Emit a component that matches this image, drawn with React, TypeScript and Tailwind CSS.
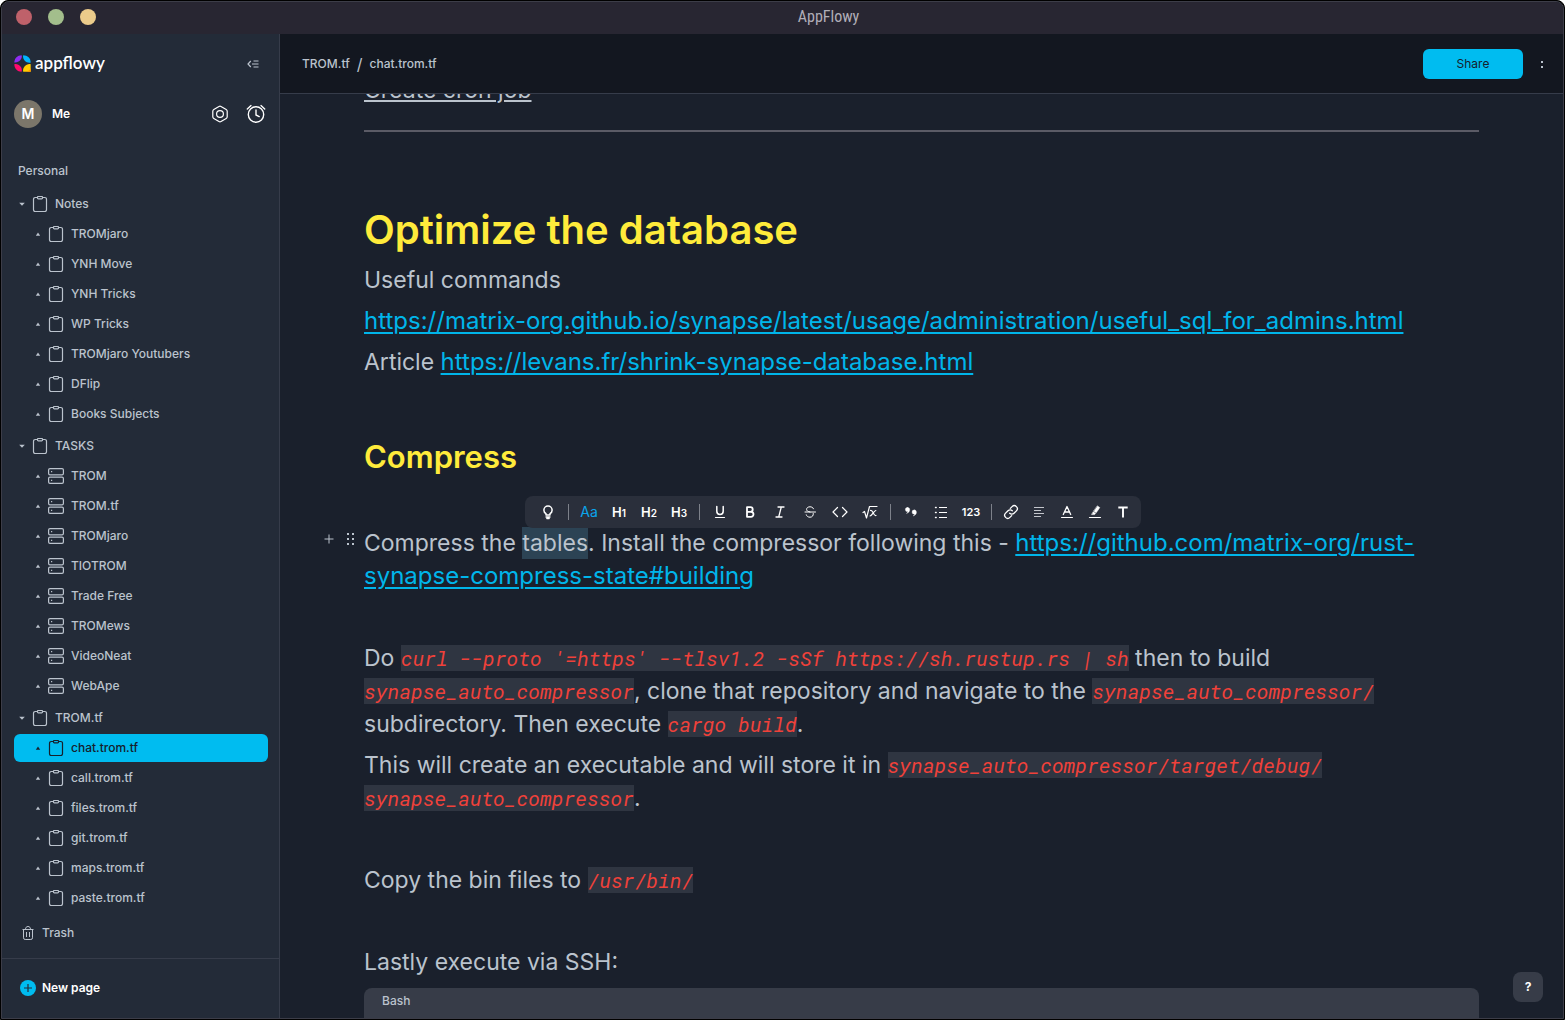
import React from "react";
import clsx from "clsx";

type PageKind = "doc" | "board";

interface PageItem {
  name: string;
  kind: PageKind;
}

interface Section {
  name: string;
  children: PageItem[];
}

const doc = (name: string): PageItem => ({ name, kind: "doc" });
const board = (name: string): PageItem => ({ name, kind: "board" });

const SECTIONS: Section[] = [
  {
    name: "Notes",
    children: [
      doc("TROMjaro"),
      doc("YNH Move"),
      doc("YNH Tricks"),
      doc("WP Tricks"),
      doc("TROMjaro Youtubers"),
      doc("DFlip"),
      doc("Books Subjects"),
    ],
  },
  {
    name: "TASKS",
    children: [
      board("TROM"),
      board("TROM.tf"),
      board("TROMjaro"),
      board("TIOTROM"),
      board("Trade Free"),
      board("TROMews"),
      board("VideoNeat"),
      board("WebApe"),
    ],
  },
  {
    name: "TROM.tf",
    children: [
      doc("chat.trom.tf"),
      doc("call.trom.tf"),
      doc("files.trom.tf"),
      doc("git.trom.tf"),
      doc("maps.trom.tf"),
      doc("paste.trom.tf"),
    ],
  },
];

const ACTIVE_PAGE = "chat.trom.tf";

function DocIcon() {
  return (
    <svg className="w-4 h-4 shrink-0" viewBox="0 0 16 16" fill="none" stroke="currentColor" strokeWidth="1.2">
      <path d="M5.500 1.500H3.200a1.700 1.700 0 0 0-1.700 1.700v10.600a1.700 1.700 0 0 0 1.700 1.700h9.600a1.700 1.700 0 0 0 1.700-1.700V3.200a1.700 1.700 0 0 0-1.700-1.700h-2.300" />
      <rect x="5.500" y="0.500" width="5" height="2.400" rx="0.800" />
    </svg>
  );
}

function BoardIcon() {
  return (
    <svg className="w-4 h-4 shrink-0" viewBox="0 0 16 16" fill="none" stroke="currentColor" strokeWidth="1.2">
      <rect x="0.600" y="0.600" width="14.800" height="6.200" rx="1.400" />
      <rect x="0.600" y="9.200" width="14.800" height="6.200" rx="1.400" />
      <path d="M3 3.700h1.200M3 12.300h1.200" />
    </svg>
  );
}

function Logo() {
  return (
    <svg className="w-[17px] h-[17px]" viewBox="0 0 17 17">
      <path d="M0.300 7.600C0.500 3 3.400 0.400 7.600 0.300C8.800 3 5.200 8 0.300 7.600Z" fill="#8e2df0" />
      <path d="M9.200 0.300C13.600 0.400 16.600 3.200 16.700 7.600C13 8.800 8 4.800 9.200 0.300Z" fill="#00b5ff" />
      <path d="M0.300 9.200C4.600 8.100 8.900 12.400 7.600 16.700C3.200 16.600 0.400 13.600 0.300 9.200Z" fill="#ff0a6c" />
      <path d="M16.700 9.200V16.700H9.200C8.100 13 12.400 8.200 16.700 9.200Z" fill="#ffce00" />
      <path d="M16.700 12.400V16.700H11.600C14.400 16.400 16.200 15 16.700 12.400Z" fill="#ff9500" />
    </svg>
  );
}

function ToolIcon({ children }: { children: React.ReactNode }) {
  return (
    <svg
      className="w-4 h-4"
      viewBox="0 0 16 16"
      fill="none"
      stroke="currentColor"
      strokeLinecap="round"
      strokeLinejoin="round"
    >
      {children}
    </svg>
  );
}

interface ToolProps {
  label: string;
  narrow?: boolean;
  active?: boolean;
  children: React.ReactNode;
}

function Tool({ label, narrow, active, children }: ToolProps) {
  return (
    <button
      type="button"
      aria-label={label}
      className={clsx(
        "h-8 flex items-center justify-center cursor-pointer",
        narrow ? "w-7" : "w-[30px]",
        active ? "text-[#0ba5ec]" : "text-white"
      )}
    >
      {children}
    </button>
  );
}

function Separator() {
  return <span className="w-px h-4 mx-[5px] bg-[#7d818a]" />;
}

function Heading({ level }: { level: number }) {
  return (
    <span className="text-[13px] font-semibold leading-4">
      H<span className="text-[10px]">{level}</span>
    </span>
  );
}

function FormatToolbar() {
  return (
    <div
      role="toolbar"
      aria-label="Formatting"
      className="absolute z-10 left-[161px] -top-[27px] w-max h-8 pl-2 pr-1 flex items-center rounded-lg bg-[#2a2f3b]"
    >
      <Tool label="Turn into">
        <ToolIcon>
          <path d="M6 11v-1.400C4.700 8.900 3.900 7.700 3.900 6.200a4.100 4.100 0 0 1 8.200 0c0 1.500-.8 2.700-2.100 3.400V11z" strokeWidth="1.500" />
          <path d="M6 13h4M6.800 14.500h2.400" strokeWidth="1.300" />
        </ToolIcon>
      </Tool>
      <Separator />
      <Tool label="Text" active>
        <span className="text-sm">Aa</span>
      </Tool>
      <Tool label="Heading 1"><Heading level={1} /></Tool>
      <Tool label="Heading 2"><Heading level={2} /></Tool>
      <Tool label="Heading 3"><Heading level={3} /></Tool>
      <Separator />
      <Tool label="Underline">
        <ToolIcon>
          <path d="M4.800 2.500v4.700a3.200 3.200 0 0 0 6.400 0V2.500" strokeWidth="1.500" />
          <path d="M3.500 13.500h9" strokeWidth="1.200" />
        </ToolIcon>
      </Tool>
      <Tool label="Bold">
        <ToolIcon>
          <path d="M5 3.200h3.400a2.300 2.300 0 0 1 0 4.600H5zM5 7.800h4a2.500 2.500 0 0 1 0 5H5z" strokeWidth="1.800" />
        </ToolIcon>
      </Tool>
      <Tool label="Italic">
        <ToolIcon>
          <path d="M6 3h6M4 13h6M9.300 3L6.700 13" strokeWidth="1.300" />
        </ToolIcon>
      </Tool>
      <Tool label="Strikethrough">
        <ToolIcon>
          <path d="M11.500 4.800C11 3.500 9.700 2.800 8 2.800c-2 0-3.400 1-3.400 2.600 0 1.500 1.200 2 3.400 2.600M11.300 9.500c.3 2.200-1.200 3.700-3.300 3.700-1.900 0-3.200-.8-3.700-2.400M3 8h10.500" />
        </ToolIcon>
      </Tool>
      <Tool label="Code">
        <ToolIcon>
          <path d="M5.500 3.500L1 8l4.500 4.500M10.500 3.500L15 8l-4.500 4.500" strokeWidth="1.200" />
        </ToolIcon>
      </Tool>
      <Tool label="Equation">
        <ToolIcon>
          <path d="M1 8.500l1.500-1 2 6.500L7.500 2.500H15M8.500 6.500c2.500-1 3 6 5.500 5M13.800 6.500C11.500 7 10.500 11.500 8 12" strokeWidth="1.200" />
        </ToolIcon>
      </Tool>
      <Separator />
      <Tool label="Quote">
        <ToolIcon>
          <path d="M4.600 3.500a2 2 0 1 0 .4 3.900c-.2.800-.7 1.400-1.500 2C5.800 8.800 6.800 7.200 6.700 5.500a2 2 0 0 0-2.100-2zM11.300 6a2 2 0 1 0 .4 3.900c-.2.800-.7 1.400-1.500 2 2.300-.6 3.300-2.200 3.200-3.900a2 2 0 0 0-2.100-2z" fill="currentColor" strokeWidth=".4" />
        </ToolIcon>
      </Tool>
      <Tool label="Bulleted list">
        <ToolIcon>
          <path d="M6 3.500h8M6 8.500h8M6 13.500h8" strokeLinecap="butt" />
          <path d="M2.500 3.500h.7M2.500 8.500h.7M2.500 13.500h.7" strokeWidth="1.400" />
        </ToolIcon>
      </Tool>
      <Tool label="Numbered list">
        <span className="text-[11px] leading-4 font-semibold">123</span>
      </Tool>
      <Separator />
      <Tool label="Link" narrow>
        <ToolIcon>
          <path d="M6.700 9.300a3 3 0 0 0 4.300 0l2.400-2.400a3 3 0 0 0-4.300-4.300L7.300 4.400M9.300 6.700a3 3 0 0 0-4.300 0L2.600 9.100a3 3 0 0 0 4.300 4.300l1.800-1.800" strokeWidth="1.300" />
        </ToolIcon>
      </Tool>
      <Tool label="Align" narrow>
        <ToolIcon>
          <path d="M3 3.500h10M3 6.500h7M3 9.500h10M3 12.500h7" stroke="#c3c6cc" strokeLinecap="butt" />
        </ToolIcon>
      </Tool>
      <Tool label="Text color" narrow>
        <ToolIcon>
          <path d="M4.300 10.500L8 2.500l3.700 8M5.500 8h5" strokeWidth="1.300" />
          <path d="M2.500 13.500h11" />
        </ToolIcon>
      </Tool>
      <Tool label="Highlight color" narrow>
        <ToolIcon>
          <path d="M10.500 2l2.300 1.600-3.600 5.200-2.300-1.600zM6.400 7.800l2.200 1.600-1 1.200H4.800z" fill="currentColor" strokeWidth=".5" />
          <path d="M2.500 13.500h11" strokeWidth="1.200" />
        </ToolIcon>
      </Tool>
      <Tool label="Font" narrow>
        <ToolIcon>
          <path d="M3.300 3.500h9.400M8 3.500V13.500" strokeWidth="1.900" strokeLinecap="butt" />
        </ToolIcon>
      </Tool>
    </div>
  );
}

function PageRow({ page }: { page: PageItem }) {
  const active = page.name === ACTIVE_PAGE;
  return (
    <a
      href="#"
      className={clsx(
        "h-7 mb-0.5 pl-[21px] flex items-center rounded-md text-xs",
        active ? "bg-[#00bcf0] text-[#16202c] font-medium" : "text-[#bbc3cd] font-medium"
      )}
    >
      <svg className="w-1.5 h-1.5 mr-[7px]" viewBox="0 0 6 6" fill="currentColor">
        <path d="M0.800 4.800L3 1.600l2.200 3.200z" />
      </svg>
      {page.kind === "doc" ? <DocIcon /> : <BoardIcon />}
      <span className="ml-[7px]">{page.name}</span>
    </a>
  );
}

function Sidebar() {
  return (
    <aside className="w-[278px] shrink-0 flex flex-col bg-[#232b38] border-r border-[#363c4a] text-[#bbc3cd]">
      <div className="h-[59px] pl-3 pr-5 flex items-center justify-between">
        <div className="flex items-center gap-1 text-white">
          <Logo />
          <span className="text-[17px] font-semibold leading-6 pb-0.5 font-[Lato,sans-serif]">appflowy</span>
        </div>
        <button type="button" aria-label="Hide sidebar">
          <svg className="w-3 h-3" viewBox="0 0 12 12" fill="none" stroke="currentColor">
            <path d="M3.800 3L1 6l2.800 3M6.500 3h5M5 6h6.500M6.500 9h5" strokeWidth="1.200" />
          </svg>
        </button>
      </div>

      <div className="h-[41px] pl-3 pr-[13px] flex items-center">
        <span className="w-7 h-7 rounded-full bg-[#7b766a] text-white text-sm font-semibold flex items-center justify-center">
          M
        </span>
        <span className="ml-2.5 text-xs font-semibold text-white">Me</span>
        <div className="ml-auto flex gap-4 text-white">
          <button type="button" aria-label="Settings">
            <svg className="w-5 h-5" viewBox="0 0 20 20" fill="none" stroke="currentColor" strokeWidth="1.200">
              <path d="M9 2.500a2 2 0 0 1 2 0l5.200 3a2 2 0 0 1 1 1.700v5.600a2 2 0 0 1-1 1.700l-5.200 3a2 2 0 0 1-2 0l-5.200-3a2 2 0 0 1-1-1.700V7.200a2 2 0 0 1 1-1.700z" />
              <circle cx="10" cy="10" r="3.400" />
            </svg>
          </button>
          <button type="button" aria-label="Reminders">
            <svg className="w-5 h-5" viewBox="0 0 20 20" fill="none" stroke="currentColor" strokeWidth="1.400" strokeLinecap="round">
              <circle cx="10" cy="10.500" r="7.700" />
              <path d="M10 6v5l3.200 1.600M1.300 5L5 1.600M18.700 5L15 1.600" />
            </svg>
          </button>
        </div>
      </div>

      <nav className="grow min-h-0 overflow-hidden pl-3 pr-[11px] pt-[23px]">
        <div className="h-7 mb-[3px] pl-1 flex items-center text-xs font-medium">Personal</div>
        {SECTIONS.map((section) => (
          <div key={section.name}>
            <button type="button" className="w-full h-8 pl-[5px] flex items-center text-xs font-medium">
              <svg className="w-1.5 h-1.5 mr-[7px]" viewBox="0 0 6 6" fill="currentColor">
                <path d="M0.200 1.800L3 4.800l2.800-3z" />
              </svg>
              <DocIcon />
              <span className="ml-[7px]">{section.name}</span>
            </button>
            {section.children.map((page) => (
              <PageRow key={page.name} page={page} />
            ))}
          </div>
        ))}
        <a href="#" className="h-7 mt-[7px] pl-2 flex items-center gap-2 text-xs font-medium">
          <svg className="w-3 h-3.5" viewBox="0 0 12 14" fill="none" stroke="currentColor">
            <path d="M0.500 3.500h11M3.500 3.300c0-1.800 1-2.800 2.500-2.800s2.500 1 2.500 2.800M1.500 3.500v8.300a1.700 1.700 0 0 0 1.700 1.700h5.600a1.700 1.700 0 0 0 1.700-1.700V3.500M4.500 6v5M7.500 6v5" />
          </svg>
          Trash
        </a>
      </nav>

      <div className="h-[60px] shrink-0 pl-[18px] pb-0.5 flex items-center border-t border-[#363c4a]">
        <button type="button" className="flex items-center gap-1.5 text-xs font-semibold text-white">
          <svg className="w-4 h-4" viewBox="0 0 16 16" fill="none" stroke="#232b38">
            <circle cx="8" cy="8" r="8" fill="#00bcf0" stroke="none" />
            <path d="M8 4v8M4 8h8" strokeWidth="1.200" />
          </svg>
          New page
        </button>
      </div>
    </aside>
  );
}

function Code({ children }: { children: React.ReactNode }) {
  return (
    <code className="bg-[#2f3541] text-[#f0413a] text-xl leading-none italic font-['Roboto_Mono','Liberation_Mono',monospace]">
      {children}
    </code>
  );
}

function Link({ children }: { children: React.ReactNode }) {
  return (
    <a href="#" className="text-2xl leading-none text-[#00b5ea] underline underline-offset-3 decoration-2">
      {children}
    </a>
  );
}

function Block({ children }: { children?: React.ReactNode }) {
  return <p className="min-h-[41px] py-1">{children}</p>;
}

function Document() {
  return (
    <article className="grow min-h-0 overflow-hidden pl-[84px] pr-[84px] text-[23px] leading-[33px] text-[#bbc3cd]">
      <div className="-mt-6">
        <Block>
          <span className="underline underline-offset-2 decoration-2">Create cron job</span>
        </Block>
        <hr className="mt-[19px] border-t-2 border-[#5b5b66]" />

        <h1 className="mt-[68px] text-[40px] leading-[60px] font-semibold text-[#ffeb3b]">
          Optimize the database
        </h1>
        <Block>Useful commands</Block>
        <Block>
          <Link>https://matrix-org.github.io/synapse/latest/usage/administration/useful_sql_for_admins.html</Link>
        </Block>
        <Block>
          Article <Link>https://levans.fr/shrink-synapse-database.html</Link>
        </Block>
        <Block />

        <h2 className="pt-2 text-[31px] leading-[50px] font-semibold text-[#ffeb3b]">Compress</h2>
        <Block />
        <div className="relative">
          <FormatToolbar />
          <div className="absolute -left-[41px] top-2 flex items-center gap-2.5">
            <button type="button" aria-label="Add block">
              <svg className="w-3 h-4" viewBox="0 0 12 16" stroke="currentColor">
                <path d="M6 3.500v9M1.500 8h9" />
              </svg>
            </button>
            <button type="button" aria-label="Drag block">
              <svg className="w-3 h-4" viewBox="0 0 12 16" fill="currentColor">
                <path d="M2 2h2v2H2zM7 2h2v2H7zM2 7h2v2H2zM7 7h2v2H7zM2 12h2v2H2zM7 12h2v2H7z" />
              </svg>
            </button>
          </div>
          <Block>
            Compress the <mark className="py-0.5 bg-[#2c4354] text-inherit">tables</mark>. Install the
            compressor following this -{" "}
            <Link>https://github.com/matrix-org/rust-synapse-compress-state#building</Link>
          </Block>
        </div>
        <Block />

        <Block>
          Do <Code>curl --proto '=https' --tlsv1.2 -sSf https://sh.rustup.rs | sh</Code> then to build{" "}
          <Code>synapse_auto_compressor</Code>, clone that repository and navigate to the{" "}
          <Code>synapse_auto_compressor/</Code> subdirectory. Then execute <Code>cargo build</Code>.
        </Block>
        <Block>
          This will create an executable and will store it in{" "}
          <Code>
            synapse_auto_compressor/target/debug/
            <wbr />
            synapse_auto_compressor
          </Code>
          .
        </Block>
        <Block />
        <Block>
          Copy the bin files to <Code>/usr/bin/</Code>
        </Block>
        <Block />
        <Block>Lastly execute via SSH:</Block>

        <div className="mt-[5px] h-20 pt-[5px] px-[18px] rounded-lg bg-[#373c48] text-xs leading-4 font-medium">
          Bash
        </div>
      </div>
    </article>
  );
}

export default function App() {
  return (
    <div className="h-screen overflow-hidden bg-white font-['Inter','Open_Sans',sans-serif]">
      <div className="h-full rounded-t-lg border border-black bg-black">
        <div className="h-full flex flex-col overflow-hidden rounded-t-lg border border-[#3c3d48] bg-[#1a202c]">
          <header className="h-8 shrink-0 px-3.5 pb-0.5 grid grid-cols-[1fr_auto_1fr] items-center bg-[#282632]">
            <div className="flex gap-4">
              <button type="button" aria-label="Close" className="w-4 h-4 rounded-full bg-[#bf616a]" />
              <button type="button" aria-label="Maximize" className="w-4 h-4 rounded-full bg-[#a3be8c]" />
              <button type="button" aria-label="Minimize" className="w-4 h-4 rounded-full bg-[#ebcb8b]" />
            </div>
            <span className="pl-[92px] text-base text-[#b0aeb8] font-['Roboto_Condensed','Liberation_Sans_Narrow',sans-serif]">
              AppFlowy
            </span>
          </header>

          <div className="grow min-h-0 flex">
            <Sidebar />
            <main className="relative grow min-w-0 flex flex-col">
              <div className="h-[60px] shrink-0 pl-[22px] pr-4 flex items-center bg-[#131720] border-b border-[#363c4a] text-xs font-medium text-[#bbc3cd]">
                <a href="#">TROM.tf</a>
                <span className="mx-[7px] text-base font-normal">/</span>
                <a href="#">chat.trom.tf</a>
                <button
                  type="button"
                  className="ml-auto w-[100px] h-[30px] rounded-md bg-[#00bcf0] text-[#16202c] text-xs font-normal"
                >
                  Share
                </button>
                <button type="button" aria-label="More" className="ml-3.5">
                  <svg className="w-2.5 h-4" viewBox="0 0 10 16" fill="currentColor">
                    <path d="M4 5h2v2H4zM4 10h2v2H4z" />
                  </svg>
                </button>
              </div>
              <Document />
              <button
                type="button"
                aria-label="Help"
                className="absolute right-5 bottom-4 w-[30px] h-[30px] rounded-lg bg-[#373c48] text-white text-xs font-bold"
              >
                ?
              </button>
            </main>
          </div>
        </div>
      </div>
    </div>
  );
}
